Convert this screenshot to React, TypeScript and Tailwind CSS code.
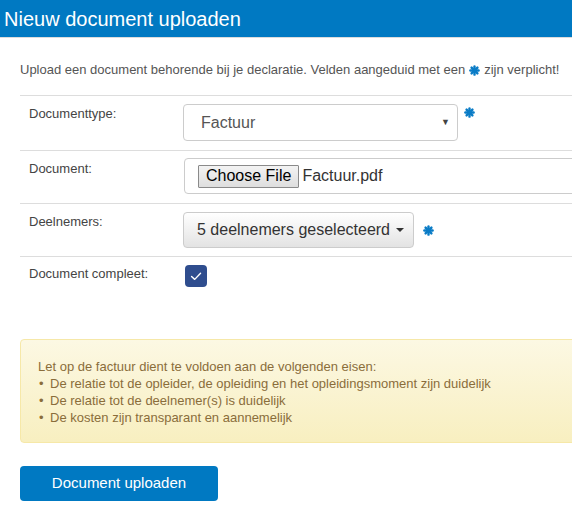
import React from "react";

function Asterisk({ className = "" }: { className?: string }) {
  return (
    <svg viewBox="0 0 12 12" className={className} aria-hidden="true">
      <g stroke="#0a7cc6" strokeWidth="2.6" strokeLinecap="round">
        <line x1="6" y1="1.5" x2="6" y2="10.5" />
        <line x1="1.5" y1="6" x2="10.5" y2="6" />
        <line x1="2.8" y1="2.8" x2="9.2" y2="9.2" />
        <line x1="2.8" y1="9.2" x2="9.2" y2="2.8" />
      </g>
    </svg>
  );
}

function Row({
  label,
  children,
  labelTop = "pt-[9px]",
}: {
  label: string;
  children: React.ReactNode;
  labelTop?: string;
}) {
  return (
    <div className="flex border-t border-[#dddddd]">
      <div className={`w-[163px] shrink-0 pl-[9px] text-[13px] leading-[18px] text-[#444] ${labelTop}`}>
        {label}
      </div>
      <div className="flex-1">{children}</div>
    </div>
  );
}

export default function App() {
  return (
    <div
      className="w-[572px] h-[508px] overflow-hidden bg-white"
      style={{ fontFamily: '"Liberation Sans", Arial, sans-serif' }}
    >
      {/* Header */}
      <div className="h-[38px] bg-[#0079c2] border-b border-[#dcdcdc] flex items-center px-[4px]">
        <h1 className="text-white text-[20px] leading-none">Nieuw document uploaden</h1>
      </div>

      <div className="pl-5 w-[640px]">
        <p className="pt-[24px] pb-[17px] text-[13px] leading-[16px] text-[#555] flex items-center gap-[4px] whitespace-nowrap">
          <span>Upload een document behorende bij je declaratie. Velden aangeduid met een</span>
          <Asterisk className="w-[11px] h-[11px]" />
          <span>zijn verplicht!</span>
        </p>

        {/* Documenttype */}
        <Row label="Documenttype:">
          <div className="flex items-start pt-[8px] pb-[9px]">
            <div className="w-[275px] h-[37px] border border-[#cccccc] rounded-[4px] flex items-center justify-between pl-[17px] pr-[7px]">
              <span className="text-[16px] text-[#555]">Factuur</span>
              <span className="text-[9px] text-[#444]">▼</span>
            </div>
            <Asterisk className="w-[11px] h-[11px] ml-[6px] mt-[3px]" />
          </div>
        </Row>

        {/* Document */}
        <Row label="Document:">
          <div className="pt-[7px] pb-[9px]">
            <div className="w-[420px] h-[36px] ml-[1px] border border-[#cccccc] rounded-[4px] flex items-center pl-[13px] gap-[3px]">
              <span className="h-[23px] px-[7px] flex items-center border border-[#8a8a8a] rounded-[1px] bg-gradient-to-b from-[#f3f3f3] to-[#dedede] text-[16px] text-black">
                Choose File
              </span>
              <span className="text-[16px] text-[#333]">Factuur.pdf</span>
            </div>
          </div>
        </Row>

        {/* Deelnemers */}
        <Row label="Deelnemers:">
          <div className="flex items-center pt-[8px] pb-[8px]">
            <div className="h-[36px] w-[231px] border border-[#cccccc] rounded-[4px] bg-gradient-to-b from-white to-[#e3e3e3] flex items-center pl-[13px] gap-[6px] text-[16px] text-[#333]">
              <span>5 deelnemers geselecteerd</span>
              <span className="w-0 h-0 border-l-[4px] border-r-[4px] border-t-[4px] border-l-transparent border-r-transparent border-t-[#333]" />
            </div>
            <Asterisk className="w-[11px] h-[11px] ml-[9px]" />
          </div>
        </Row>

        {/* Document compleet */}
        <Row label="Document compleet:" labelTop="pt-[8px]">
          <div className="pt-[8px] pb-[52px] pl-[2px]">
            <div className="w-[22px] h-[22px] rounded-[4px] bg-[#2f4d8e] flex items-center justify-center">
              <svg viewBox="0 0 12 12" className="w-[14px] h-[14px]">
                <path d="M2.2 6.4 L4.9 8.9 L9.9 3.6" fill="none" stroke="white" strokeWidth="1.2" strokeLinecap="round" strokeLinejoin="round" />
              </svg>
            </div>
          </div>
        </Row>

        {/* Alert */}
        <div className="w-[600px] rounded-[4px] border border-[#f6e8a8] bg-gradient-to-b from-[#fcf8e3] to-[#f8efc0] px-[17px] pt-[18px] pb-[16px] text-[13px] leading-[17px] text-[#8a6d3b]">
          <p>Let op de factuur dient te voldoen aan de volgenden eisen:</p>
          <ul>
            {[
              "De relatie tot de opleider, de opleiding en het opleidingsmoment zijn duidelijk",
              "De relatie tot de deelnemer(s) is duidelijk",
              "De kosten zijn transparant en aannemelijk",
            ].map((t) => (
              <li key={t} className="flex">
                <span className="w-[12px] pl-[1px]">•</span>
                <span>{t}</span>
              </li>
            ))}
          </ul>
        </div>

        <button className="mt-[23px] w-[198px] h-[35px] rounded-[4px] bg-[#0079c2] text-white text-[15px]">
          Document uploaden
        </button>
      </div>
    </div>
  );
}
